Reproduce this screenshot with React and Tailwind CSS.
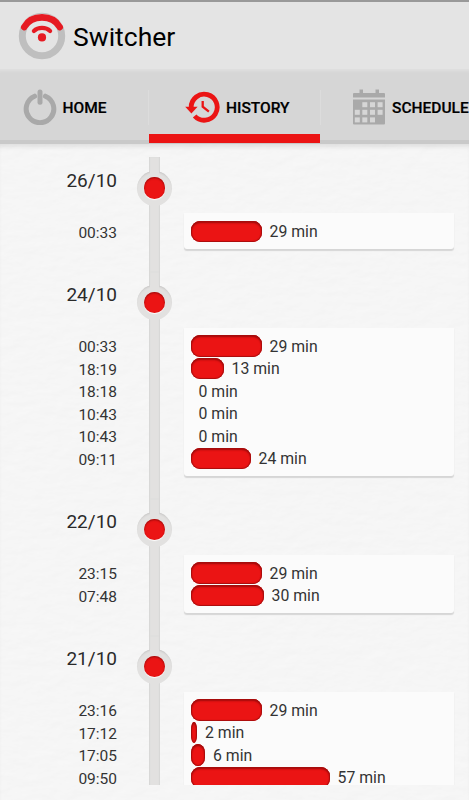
const DAYS = [
  { date: '26/10', entries: [{ time: '00:33', minutes: 29, width: 71 }] },
  {
    date: '24/10',
    entries: [
      { time: '00:33', minutes: 29, width: 71 },
      { time: '18:19', minutes: 13, width: 33 },
      { time: '18:18', minutes: 0, width: 0 },
      { time: '10:43', minutes: 0, width: 0 },
      { time: '10:43', minutes: 0, width: 0 },
      { time: '09:11', minutes: 24, width: 60 },
    ],
  },
  {
    date: '22/10',
    entries: [
      { time: '23:15', minutes: 29, width: 71 },
      { time: '07:48', minutes: 30, width: 73 },
    ],
  },
  {
    date: '21/10',
    entries: [
      { time: '23:16', minutes: 29, width: 71 },
      { time: '17:12', minutes: 2, width: 6.5 },
      { time: '17:05', minutes: 6, width: 14.5 },
      { time: '09:50', minutes: 57, width: 139 },
    ],
  },
]

function Logo() {
  return (
    <svg width="48" height="48" viewBox="0 0 48 48" fill="none" strokeLinecap="round">
      <circle cx="24" cy="24" r="19.7" stroke="#bfbfbf" strokeWidth="7" />
      <path d="M6.2 15 A21.5 21.5 0 0 1 41.8 15" stroke="#e4e4e4" strokeWidth="7.4" strokeLinecap="butt" />
      <path d="M6.3 15 C13.5 2.2 34.5 2.2 41.7 15" stroke="#e61a22" strokeWidth="6.6" />
      <path d="M15.9 19 C20 14.9 28 14.9 32.1 19" stroke="#e61a22" strokeWidth="4.2" />
      <circle cx="24" cy="25.4" r="4.1" fill="#e61a22" />
    </svg>
  )
}

function PowerIcon() {
  return (
    <svg width="34" height="36" viewBox="0 0 34 36" fill="none" stroke="#a9a9a9" strokeWidth="5" strokeLinecap="round">
      <path d="M11.6 7.2 A13.8 13.8 0 1 0 22.4 7.2" />
      <path d="M17 3 V13.3" />
    </svg>
  )
}

function HistoryIcon() {
  return (
    <svg width="35" height="32" viewBox="0 0 35 32" fill="none" stroke="#eb1414">
      <path d="M6.2 16.5 A13 13 0 1 1 9.6 25" strokeWidth="4.8" />
      <path d="M0.2 15.8 H12.6 L6.4 22.4 Z" fill="#eb1414" stroke="none" />
      <path d="M17.7 10 V15.6 L23.9 20.6" strokeWidth="2.3" />
    </svg>
  )
}

function CalendarIcon() {
  const cells = [
    [10.3, 13.2], [18, 13.2], [25.6, 13.2],
    [2.8, 20.8], [10.3, 20.8], [18, 20.8], [25.6, 20.8],
    [2.8, 28.4], [10.3, 28.4], [18, 28.4],
  ]
  return (
    <svg width="34" height="36" viewBox="0 0 34 36" fill="#a9a9a9">
      <path d="M1 5 Q1 4 2 4 H7.5 V0.5 H11 V4 H23.5 V0.5 H27 V4 H32 Q33 4 33 5 V8.6 H1 Z" />
      <path d="M1 10.4 H33 V34.5 Q33 35.5 32 35.5 H2 Q1 35.5 1 34.5 Z" />
      {cells.map(([x, y]) => (
        <rect key={`${x}-${y}`} x={x} y={y} width="5" height="5" fill="#d6d6d6" />
      ))}
    </svg>
  )
}

/** Subtle embossed paper behind the timeline */
function PaperTexture() {
  return (
    <svg className="absolute inset-0 -z-10 opacity-15" width="469" height="657">
      <filter id="paper" x="0" y="0" width="100%" height="100%" colorInterpolationFilters="sRGB">
        <feTurbulence type="fractalNoise" baseFrequency="0.05 0.1" numOctaves="3" seed="4" />
        <feDiffuseLighting surfaceScale="0.3" diffuseConstant="1.22" lightingColor="#f6f6f6">
          <feDistantLight azimuth="60" elevation="55" />
        </feDiffuseLighting>
      </filter>
      <rect width="469" height="657" filter="url(#paper)" />
    </svg>
  )
}

function TabLabel({ children }) {
  return <span className="pt-[3px] text-[15.5px] leading-5 font-medium [-webkit-text-stroke:0.2px_black]">{children}</span>
}

function Divider() {
  return <div className="mt-[21px] h-[35px] w-px shrink-0 bg-[#dcdcdc]" />
}

function Tabs() {
  return (
    <nav className="flex h-[75px] w-full shrink-0 overflow-hidden bg-[#d6d6d6] shadow-[inset_0_4px_3px_-2px_#dfdfdf,inset_0_-4px_0_#c9c9c9]">
      <div className="flex w-[148px] shrink-0 items-center gap-[6px] pl-[22.5px]">
        <PowerIcon />
        <TabLabel>HOME</TabLabel>
      </div>
      <Divider />
      <div className="relative flex w-[171px] shrink-0 items-center gap-[6px] pl-9">
        <HistoryIcon />
        <TabLabel>HISTORY</TabLabel>
        <div className="absolute inset-x-0 bottom-px h-[9px] bg-[#eb1414]" />
      </div>
      <Divider />
      <div className="flex shrink-0 items-center gap-[6px] pl-[31px]">
        <CalendarIcon />
        <TabLabel>SCHEDULE</TabLabel>
      </div>
    </nav>
  )
}

function Bar({ width }) {
  if (!width) return null
  return (
    <div
      className="h-[21.5px] shrink-0 bg-[#eb1414] shadow-[inset_0_0_1px_1px_#a80d0d,inset_0_2px_2px_#a00c0c]"
      style={{ width, borderRadius: `${Math.min(9, width / 2)}px / 9px` }}
    />
  )
}

function Day({ date, entries }) {
  return (
    <section className="flex pb-[23px]">
      <div className="w-[117px] shrink-0 pt-[13.5px] text-right">
        <h2 className="h-[50px] text-[19px] leading-5 text-[#2a2a2a]">{date}</h2>
        {entries.map((e, i) => (
          <div key={i} className="h-[22.5px] pt-[5px] text-[15.5px] leading-[14px] text-[#333]">
            {e.time}
          </div>
        ))}
      </div>
      <div className="relative -mb-[23px] ml-5 flex w-[35px] shrink-0 justify-center">
        <div className="w-[11px] bg-[#e2e1e0] shadow-[inset_1px_0_1px_#d8d7d6,inset_-1px_0_1px_#d8d7d6]" />
        <div className="absolute top-[13.5px] left-0 flex size-[35px] items-center justify-center rounded-full bg-[#e2e1e0] shadow-[inset_0_2px_2px_-1px_#c8c7c6]">
          <div className="absolute bottom-0 h-2 w-[9px] bg-[#e2e1e0]" />
          <div className="absolute top-0 h-2 w-[9px] bg-[#e2e1e0]" />
          <div className="relative size-[21.5px] rounded-full bg-[#eb1414] shadow-[inset_0_1px_2px_#970b0b,0_1px_1px_#fff]" />
        </div>
      </div>
      <div className="mt-14 ml-3 h-fit w-[270px] rounded-b-[3px] bg-[#fbfbfb] px-[6.5px] pt-[7.5px] pb-[5.5px] shadow-[0_1.5px_1px_#d6d6d6]">
        {entries.map((e, i) => (
          <div key={i} className="flex h-[22.5px] items-start">
            <Bar width={e.width} />
            <span className="ml-2 pt-[4.5px] text-[15.8px] leading-[14px] text-[#333]">{e.minutes} min</span>
          </div>
        ))}
      </div>
    </section>
  )
}

export default function App() {
  return (
    <div className="flex h-[800px] w-[469px] flex-col overflow-hidden bg-[#f6f6f6] font-[Roboto,sans-serif] text-black">
      <header className="flex h-[69px] shrink-0 items-center gap-[7px] border-t-2 border-[#999] bg-[#e4e4e4] pl-[18px]">
        <Logo />
        <h1 className="pt-[3px] text-[26.5px] leading-8">Switcher</h1>
      </header>
      <Tabs />
      <main className="relative isolate h-[656px] shrink-0 pt-[13px] shadow-[inset_0_5px_4px_-2px_#dcdcdc]">
        <PaperTexture />
        <div className="h-[628px] overflow-hidden">
          {DAYS.map((day) => (
            <Day key={day.date} {...day} />
          ))}
        </div>
      </main>
    </div>
  )
}
